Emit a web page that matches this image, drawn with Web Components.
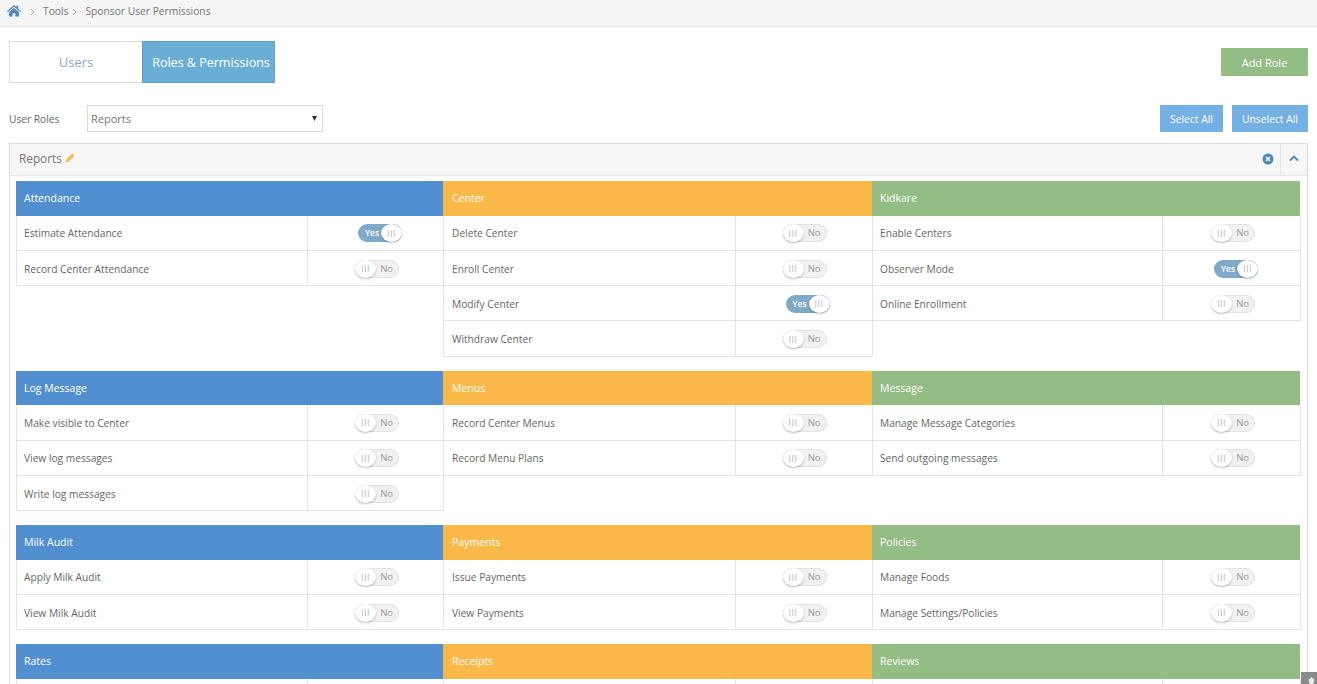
<!DOCTYPE html>
<html lang="en"><head><meta charset="utf-8"><title>Sponsor User Permissions</title>
<style>
html,body{margin:0;padding:0;height:684px;overflow:hidden;background:#fff;font-family:"Open Sans",sans-serif;}
</style></head><body>
<app-page></app-page>
<script>
function def(name, css, html, setup){
  customElements.define(name, class extends HTMLElement{
    connectedCallback(){
      if(this.shadowRoot) return;
      const r=this.attachShadow({mode:'open'});
      r.innerHTML='<style>'+css+'</style>'+(typeof html==='function'?html(this):html);
      if(setup) setup(this,r);
    }
  });
}

def('bread-crumbs',
`:host{display:flex;align-items:center;height:26px;background:#f5f5f5;border-bottom:1px solid #e6e6e6;padding-left:7px;font-size:10.25px;color:#777;}
 svg{display:block}
 .home{width:14px;height:13px;margin-top:-5px}
 .sep{color:#aaa;margin-top:-3px;}
 span{margin-top:-4px}`,
`<svg class="home" viewBox="0 0 14 12"><path fill="#4d86bd" d="M7 0.6 L9.3 2.6V1.2h1.9v3.1L14 6.7l-.8.9L7 2.3.8 7.6 0 6.7zM7 3.4l4.9 4.2V12H8.4V8.8H5.6V12H2.1V7.6z"/></svg>
 <svg class="sep" style="margin-left:9px;width:5px;height:8px" viewBox="0 0 5 8"><path d="M1 1l3 3-3 3" fill="none" stroke="#aaa" stroke-width=".9"/></svg>
 <span style="margin-left:8px">Tools</span>
 <svg class="sep" style="margin-left:4px;width:5px;height:8px" viewBox="0 0 5 8"><path d="M1 1l3 3-3 3" fill="none" stroke="#aaa" stroke-width=".9"/></svg>
 <span style="margin-left:8px">Sponsor User Permissions</span>`);

def('tab-switch',
`:host{display:flex;width:266px;height:42px;font-size:13px;box-sizing:border-box;}
 div{flex:none;width:133px;display:flex;align-items:center;justify-content:center;box-sizing:border-box;white-space:nowrap;}
 .off{border:1px solid #ddd;border-right:0;color:#8fa8bf;background:#fff;}
 .on{background:#6aaed6;color:#fff;border:1px solid #5f9fc6;font-size:12.5px;padding-left:5px;}`,
`<div class="off">Users</div><div class="on">Roles &amp; Permissions</div>`);

def('flat-button',
`:host{display:flex;align-items:center;justify-content:center;color:#fff;font-size:var(--fs,11px);box-sizing:border-box;height:var(--h,27px);width:var(--w,auto);background:var(--bg,#75b0e4);white-space:nowrap;}`,
`<slot></slot>`);

def('role-select',
`:host{display:block;width:236px;height:27px;}
 select{appearance:none;-webkit-appearance:none;display:block;width:100%;height:100%;box-sizing:border-box;border:1px solid #d9d9d9;border-radius:0;padding:0 0 1px 3px;font:11px "Open Sans",sans-serif;color:#777;outline:0;
 background:#fff url("data:image/svg+xml,%3Csvg xmlns='http://www.w3.org/2000/svg' width='5' height='5'%3E%3Cpath d='M0 0h5L2.5 5z' fill='%23333'/%3E%3C/svg%3E") no-repeat right 5px center;}`,
`<select><option>Reports</option></select>`);

def('perm-toggle',
`:host{display:block;position:relative;width:44px;height:18px;box-sizing:border-box;border-radius:9px;font-size:9px;user-select:none;}
 :host([on]){background:#7fa9c9;left:3px;}
 :host(:not([on])){background:#f1f1f1;border:1px solid #e2e2e2;}
 .knob{position:absolute;top:-1px;width:21px;height:18px;border-radius:50%/50%;background:#fff;box-shadow:0 1px 2px rgba(0,0,0,.26);color:#b5b5b5;display:flex;align-items:center;justify-content:center;font-weight:400;letter-spacing:.5px;font-size:9px;}
 :host([on]) .knob{top:0;right:0;}
 :host(:not([on])) .knob{left:-1px;}
 .t{position:absolute;top:0;line-height:16px;}
 :host([on]) .t{left:7px;color:#fff;line-height:18px;font-weight:600;font-size:8.5px;}
 :host(:not([on])) .t{right:5px;color:#999;font-size:9.5px;}`,
(h)=>`<span class="t">${h.hasAttribute('on')?'Yes':'No'}</span><span class="knob">III</span>`);

def('perm-row',
`:host{display:flex;height:35.3px;box-sizing:border-box;border-left:1px solid #e4e4e4;border-right:1px solid #e4e4e4;border-bottom:1px solid #e4e4e4;font-size:10.2px;color:#666;margin-right:-1px;}
 .l{width:var(--lw,290px);flex:none;display:flex;align-items:center;padding-left:var(--pl,7px);padding-top:1px;box-sizing:border-box;border-right:1px solid #e4e4e4;white-space:nowrap;}
 .c{flex:1;display:flex;align-items:center;justify-content:center;padding-left:var(--tp,3px);padding-top:1px;}`,
(h)=>`<div class="l"><slot></slot></div><div class="c">${h.hasAttribute('blank')?'':`<perm-toggle ${h.hasAttribute('on')?'on':''}></perm-toggle>`}</div>`);

def('perm-col',
`:host{display:block;min-width:0;}
 .h{height:34.6px;background:var(--c);color:#fff;font-size:10.5px;display:flex;align-items:center;padding-left:var(--hp,8px);box-sizing:border-box;white-space:nowrap;}`,
(h)=>`<div class="h">${h.getAttribute('title')}</div><slot></slot>`);

const DATA=[
 [['Attendance',['Estimate Attendance*','Record Center Attendance']],['Center',['Delete Center','Enroll Center','Modify Center*','Withdraw Center']],['Kidkare',['Enable Centers','Observer Mode*','Online Enrollment']]],
 [['Log Message',['Make visible to Center','View log messages','Write log messages']],['Menus',['Record Center Menus','Record Menu Plans']],['Message',['Manage Message Categories','Send outgoing messages']]],
 [['Milk Audit',['Apply Milk Audit','View Milk Audit']],['Payments',['Issue Payments','View Payments']],['Policies',['Manage Foods','Manage Settings/Policies']]],
 [['Rates',[' ']],['Receipts',[' ']],['Reviews',[' ']]]
];
const COLORS=['#528fd0','#fbb94a','#94bc85'];
const LW=[291,292,290];
const EXTRA=['--pl:7px;--hp:8px;--tp:3px','--pl:8px;--hp:9px;--tp:1px','--pl:7px;--hp:8px;--tp:3px'];

def('perm-grid',
`:host{display:block;}
 .g{display:grid;grid-template-columns:427px 429px 428px;margin-bottom:13.9px;}`,
DATA.map(g=>`<div class="g">`+g.map((c,i)=>
  `<perm-col title="${c[0]}" style="--c:${COLORS[i]};--lw:${LW[i]}px;${EXTRA[i]}">`+c[1].map(t=>{
    const blank=t===' ', on=t.endsWith('*');
    return `<perm-row ${blank?'blank':''} ${on?'on':''}>${blank?'':t.replace('*','')}</perm-row>`;
  }).join('')+`</perm-col>`).join('')+`</div>`).join(''));

def('role-panel',
`:host{display:block;border:1px solid #dcdcdc;border-bottom:0;box-sizing:border-box;}
 header{display:flex;align-items:center;height:32px;background:#f6f6f6;border-bottom:1px solid #e6e6e6;padding-left:9px;color:#777;font-size:11.8px;box-sizing:border-box;}
 .t{margin-top:-4px}
 .pen{margin-left:3px;display:block;margin-top:-3px}
 .tools{margin-left:auto;display:flex;align-items:center;height:100%;}
 .x{display:block;margin:-2px 6px 0 0}
 .div{width:1px;height:100%;background:#e4e4e4;}
 .up{width:26px;display:flex;justify-content:center;margin-top:-2px}
 .body{padding:5px 7px 0 6px;}`,
`<header><span class="t">Reports</span>
  <svg class="pen" width="10" height="10" viewBox="0 0 10 10"><path fill="#f5b75a" d="M7.2.6l2.2 2.2-6 6L.5 9.5l.7-2.9z"/></svg>
  <div class="tools">
   <svg class="x" width="12" height="12" viewBox="0 0 12 12"><circle cx="6" cy="6" r="5.5" fill="#4f88bd"/><path d="M4 4l4 4M8 4l-4 4" stroke="#fff" stroke-width="1.6"/></svg>
   <div class="div"></div>
   <div class="up"><svg width="10" height="7" viewBox="0 0 10 7"><path d="M1 5.5l4-4 4 4" fill="none" stroke="#4f88bd" stroke-width="1.8"/></svg></div>
  </div></header>
 <div class="body"><perm-grid></perm-grid></div>`);

def('top-link',
`:host{position:fixed;right:0;bottom:0;width:16px;height:12px;box-sizing:border-box;padding-left:5px;background:#8a8a8a;display:flex;justify-content:center;align-items:flex-end;}
 svg{display:block}`,
`<svg width="7" height="7" viewBox="0 0 8 8"><path fill="#eee" d="M4 0l4 4H6.5v4h-5V4H0z"/></svg>`);

def('app-page',
`:host{display:block;height:684px;overflow:hidden;font-size:11px;color:#666;}
 main{padding:14px 9px 0;}
 .row1{display:flex;justify-content:space-between;align-items:flex-start;}
 .row2{display:flex;align-items:center;margin-top:22px;}
 .lbl{width:78px;font-size:10.2px;color:#666;}
 .right{margin-left:auto;display:flex;gap:9px;--fs:10.3px;}
 flat-button.add{margin-top:7px;}
 role-panel{margin-top:11px;}`,
`<bread-crumbs></bread-crumbs>
 <main>
  <div class="row1"><tab-switch></tab-switch><flat-button class="add" style="--w:87px;--h:28px;--bg:#94bc85">Add Role</flat-button></div>
  <div class="row2"><span class="lbl">User Roles</span><role-select></role-select>
   <div class="right"><flat-button style="--w:63px">Select All</flat-button><flat-button style="--w:76px">Unselect All</flat-button></div></div>
  <role-panel></role-panel>
 </main>
 <top-link></top-link>`);
</script>
</body></html>
